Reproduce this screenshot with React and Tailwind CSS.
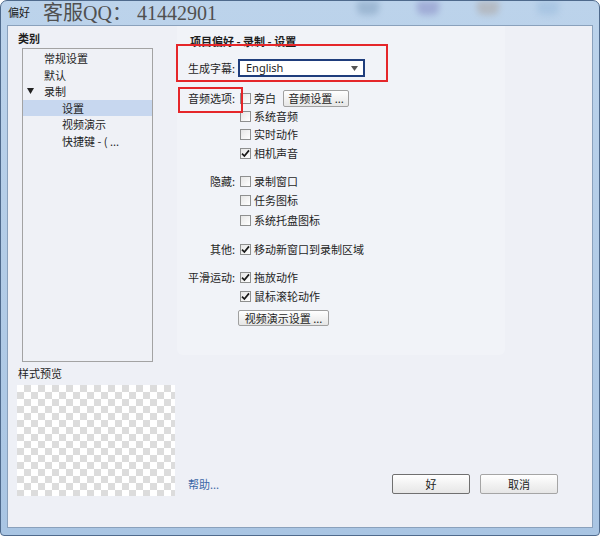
import React from "react";

const font = "font-['Noto_Sans_CJK_SC','Noto_Sans',sans-serif]";

function Check({ checked }) {
  return (
    <span className="ml-[2px] w-[11px] h-[11px] shrink-0 border border-[#8e8f8f] bg-linear-to-br from-[#e6e6e6] to-white flex items-center justify-center">
      {checked && (
        <svg width="9" height="9" viewBox="0 0 9 9">
          <path d="M1 4.6 L3.4 7 L8 1.4" fill="none" stroke="#1a1a1a" strokeWidth="1.7" />
        </svg>
      )}
    </span>
  );
}

function WinButton({ children, className }) {
  return (
    <div className={"flex items-center justify-center border rounded-[2px] bg-linear-to-b from-white to-[#e6e6e6] text-[11px] text-[#1e1e1e] " + className}>
      {children}
    </div>
  );
}

const rows = [
  { label: "音频选项:", text: "旁白", mt: "mt-[12px]", button: true },
  { label: "", text: "系统音频", mt: "mt-0" },
  { label: "", text: "实时动作", mt: "mt-0" },
  { label: "", text: "相机声音", checked: true, mt: "mt-[1px]" },
  { label: "隐藏:", text: "录制窗口", mt: "mt-[10px]" },
  { label: "", text: "任务图标", mt: "mt-[1px]" },
  { label: "", text: "系统托盘图标", mt: "mt-[2px]" },
  { label: "其他:", text: "移动新窗口到录制区域", checked: true, mt: "mt-[11px]" },
  { label: "平滑运动:", text: "拖放动作", checked: true, mt: "mt-[10px]" },
  { label: "", text: "鼠标滚轮动作", checked: true, mt: "mt-[1px]" },
];

const tree = [
  { text: "常规设置", pad: "pl-[21px]" },
  { text: "默认", pad: "pl-[21px]" },
  { text: "录制", pad: "pl-[21px]", arrow: true },
  { text: "设置", pad: "pl-[39px]", selected: true },
  { text: "视频演示", pad: "pl-[39px]" },
  { text: "快捷键 - ( ...", pad: "pl-[39px]" },
];

export default function App() {
  return (
    <div className={"w-[600px] h-[536px] flex flex-col overflow-hidden rounded-t-[7px] rounded-b-[4px] border border-[#4f6a8c] bg-linear-to-b from-[#bcd3eb] to-[#a9c5e3] text-[#1e1e1e] " + font}>
      {/* TITLE BAR */}
      <div className="h-[24px] shrink-0 flex items-center">
        <span className="ml-[7px] -mt-[2px] text-[11px] text-[#1c1c1c]">偏好</span>
        <span className="ml-[13px] text-[20px] leading-none text-[#505050] font-['Liberation_Serif','Noto_Sans_CJK_SC',serif]">
          客服QQ： 41442901
        </span>
        <div className="ml-auto mr-[40px] flex items-start gap-[38px] self-start opacity-40 blur-[3px]">
          <div className="w-[22px] h-[14px] rounded-b-[6px] bg-[#6f8fb0]" />
          <div className="w-[22px] h-[14px] rounded-b-[6px] bg-[#7774b8]" />
          <div className="w-[22px] h-[14px] rounded-b-[6px] bg-[#a89688]" />
          <div className="w-[22px] h-[14px] rounded-b-[6px] bg-[#8fb4d8]" />
        </div>
      </div>

      <div className="flex flex-1 px-[6px]">
        {/* CLIENT AREA */}
        <div className="flex-1 flex border border-[#8aa1bc] bg-[#eef0f6] relative">
          {/* LEFT COLUMN */}
          <div className="w-[169px] shrink-0 flex flex-col">
            <div className="pl-[10px] pt-[4px] h-[20px] leading-[16px] text-[11px] font-bold">类别</div>
            <div className="ml-[14px] mt-[2px] w-[131px] h-[314px] border border-[#a3a3a3] pt-[1px] bg-[#eff1f6]">
              {tree.map((t) => (
                <div
                  key={t.text}
                  className={"h-[16.5px] flex items-center text-[11px] " + t.pad + (t.selected ? " bg-[#c7d7ef]" : "")}
                >
                  {t.arrow && (
                    <svg width="7" height="6" viewBox="0 0 7 6" className="-ml-[17px] mr-[10px]">
                      <path d="M0 0 H7 L3.5 6 Z" fill="#222" />
                    </svg>
                  )}
                  {t.text}
                </div>
              ))}
            </div>
            <div className="pl-[10px] mt-[3px] h-[16px] leading-[16px] text-[11px]">样式预览</div>
            <div className="ml-[9px] mt-[4px] w-[158px] h-[111px] bg-[conic-gradient(#dcdcdc_25%,#fff_0_50%,#dcdcdc_0_75%,#fff_0)] bg-[length:14px_14px]" />
          </div>

          {/* RIGHT COLUMN */}
          <div className="flex-1 flex flex-col">
            <div className="w-[328px] h-[329px] bg-[#f1f3f8] rounded-b-[6px] pl-[11px]">
              <div className="pt-[7px] pl-[2px] h-[23px] leading-[16px] text-[11px] font-bold">项目偏好 - 录制 - 设置</div>

              <div className="-ml-[3px]">
                <div className="mt-[10px] h-[18px] grid grid-cols-[53px_1fr] items-center">
                  <div className="text-right pr-[3px] text-[11px] whitespace-nowrap">生成字幕:</div>
                  <div className="w-[127px] h-[18px] border-2 border-[#1f3d7c] bg-white flex items-center justify-between pl-[6px] pr-[5px]">
                    <span className="text-[11px] font-['Noto_Sans',sans-serif] text-[#222]">English</span>
                    <svg width="7" height="5" viewBox="0 0 7 5">
                      <path d="M0 0 H7 L3.5 5 Z" fill="#555" />
                    </svg>
                  </div>
                </div>

                {rows.map((r) => (
                  <div key={r.text} className={"h-[18px] grid grid-cols-[53px_1fr] items-center " + r.mt}>
                    <div className="text-right pr-[3px] text-[11px] whitespace-nowrap">{r.label}</div>
                    <div className="flex items-center gap-[3px] text-[11px]">
                      <Check checked={r.checked} />
                      <span>{r.text}</span>
                      {r.button && (
                        <WinButton className="ml-[4px] w-[66px] h-[17px] border-[#a0a0a0]">音频设置 ...</WinButton>
                      )}
                    </div>
                  </div>
                ))}

                <div className="mt-[5px] grid grid-cols-[53px_1fr]">
                  <div />
                  <WinButton className="w-[91px] h-[16px] border-[#a0a0a0]">视频演示设置 ...</WinButton>
                </div>
              </div>
            </div>

            <div className="flex-1" />

            {/* BOTTOM ROW */}
            <div className="h-[20px] mb-[33px] flex items-center pl-[11px] pr-[34px]">
              <span className="text-[11px] text-[#3c68a6]">帮助...</span>
              <WinButton className="ml-auto w-[78px] h-[20px] border-[#707070]">好</WinButton>
              <WinButton className="ml-[10px] w-[78px] h-[20px] border-[#a5a5a5]">取消</WinButton>
            </div>
          </div>

          {/* RED ANNOTATION BOXES */}
          <div className="absolute left-[168px] top-[18px] w-[212px] h-[38px] border-2 border-[#e5262a]" />
          <div className="absolute left-[170px] top-[61px] w-[65px] h-[26px] border-2 border-[#e5262a]" />
        </div>
      </div>
      <div className="h-[7px] shrink-0" />
    </div>
  );
}
